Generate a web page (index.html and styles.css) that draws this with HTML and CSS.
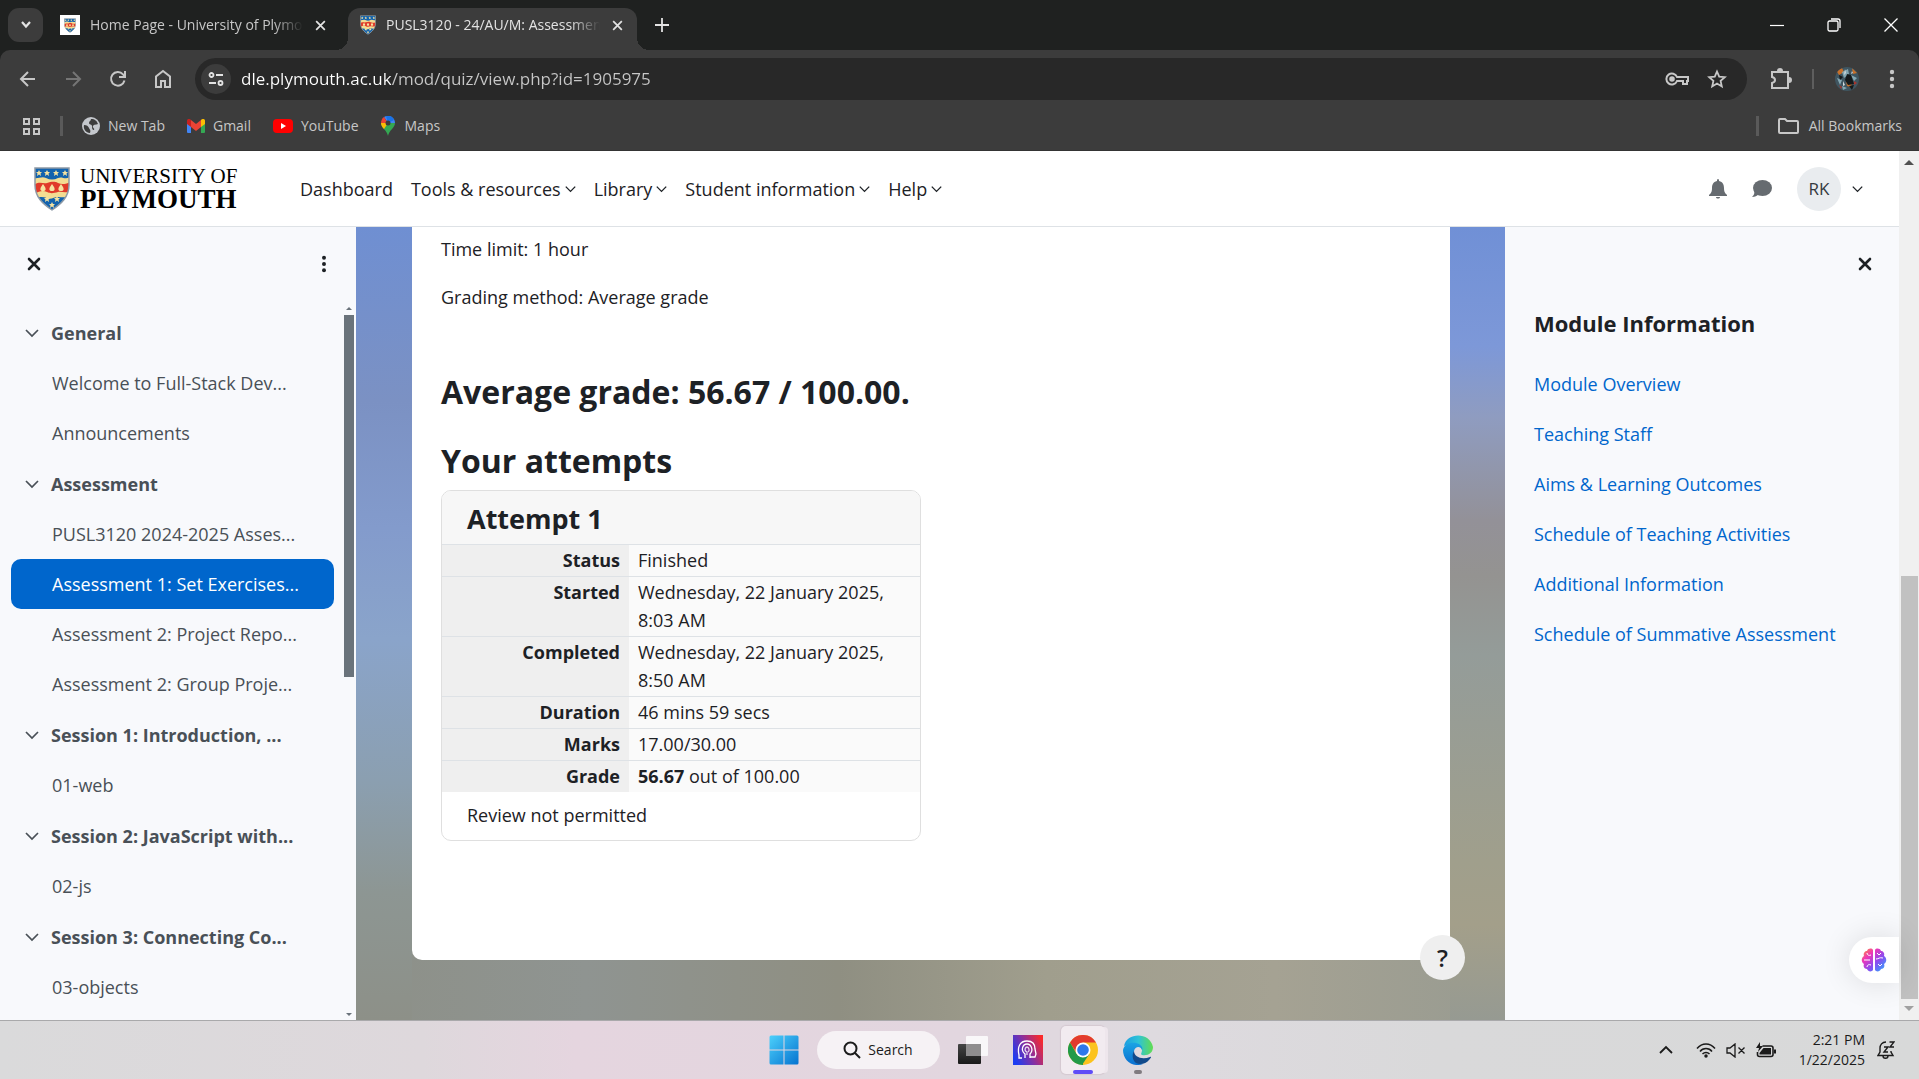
FILE: index.html
```html
<!DOCTYPE html>
<html lang="en">
<head>
<meta charset="utf-8">
<title>PUSL3120 - 24/AU/M: Assessment 1: Set Exercises</title>
<link rel="stylesheet" href="styles.css">
</head>
<body>
<svg class="defs" aria-hidden="true">
  <defs>
    <linearGradient id="win" x1="0" y1="0" x2="1" y2="1"><stop offset="0" stop-color="#4cd0fb"/><stop offset="1" stop-color="#0573d0"/></linearGradient>
    <linearGradient id="app" x1="0" y1="0.7" x2="1" y2="0.2"><stop offset="0" stop-color="#1c3df2"/><stop offset="0.5" stop-color="#8a2f9e"/><stop offset="1" stop-color="#fb2a2a"/></linearGradient>
    <linearGradient id="dark" x1="0" y1="0" x2="0" y2="1"><stop offset="0" stop-color="#454545"/><stop offset="1" stop-color="#191919"/></linearGradient>
    <linearGradient id="edge1" x1="0" y1="0" x2="1" y2="0"><stop offset="0" stop-color="#1b9de2"/><stop offset="0.5" stop-color="#2fc3d6"/><stop offset="1" stop-color="#62dd4f"/></linearGradient>
    <linearGradient id="edge2" x1="0" y1="0" x2="0" y2="1"><stop offset="0" stop-color="#1ba4e4"/><stop offset="1" stop-color="#0a6fd0"/></linearGradient>
    <linearGradient id="brain" x1="0" y1="0" x2="1" y2="1"><stop offset="0" stop-color="#ff9a2e"/><stop offset="0.3" stop-color="#ee35b8"/><stop offset="0.6" stop-color="#8a4cf0"/><stop offset="1" stop-color="#22b4ff"/></linearGradient>
    <clipPath id="round"><circle cx="13" cy="13" r="12"/></clipPath>
    <clipPath id="shieldclip"><path d="M1 1h34v17c0 12-8 19-17 25C9 37 1 30 1 18z"/></clipPath>
    <symbol id="shield" viewBox="0 0 36 44">
      <g clip-path="url(#shieldclip)">
        <path fill="#f3dc92" d="M0 0h36v44H0z"/>
        <path fill="#1363ae" d="M0 0h36v10c-5 3-8-1-12 1s-8 2-12 0-8 1-12 0z"/>
        <path fill="#e03a2a" d="M0 18c5-4 9-1 13-2s7-2 11 0 8 1 12-1v9c-5 3-8 0-12 1s-7 2-11 0-8-1-13 2z"/>
        <path fill="#1363ae" d="M0 32c6-3 9-2 13-1 4 2 7-1 11-1s8 1 12-1v15H0z"/>
        <g fill="#f5e2a0"><path id="star" d="M5 3l1 2h2L6.500 6.500 7 9 5 7.500 3 9l.5-2.500L2 5h2z"/><use href="#star" x="8"/><use href="#star" x="17"/><use href="#star" x="26"/><path id="drop" d="M9 17l2 3c1 2 1 4-2 4s-3-2-2-4z"/><use href="#drop" x="9"/><use href="#drop" x="18"/><use href="#star" x="8" y="26"/><use href="#star" x="18" y="26"/><use href="#star" x="13" y="32"/></g>
      </g>
      <path fill="none" stroke="#8d99a5" stroke-width="1.5" d="M1 1h34v17c0 12-8 19-17 25C9 37 1 30 1 18z"/>
    </symbol>
    <symbol id="x" viewBox="0 0 12 12"><path d="M2 2l8 8M10 2l-8 8" fill="none" stroke="currentColor" stroke-width="1.6"/></symbol>
    <symbol id="xb" viewBox="0 0 14 14"><path d="M2 2l10 10M12 2L2 12" fill="none" stroke="currentColor" stroke-width="2.6" stroke-linecap="round"/></symbol>
    <symbol id="down" viewBox="0 0 14 10"><path d="M1 2l6 6 6-6" fill="none" stroke="currentColor" stroke-width="1.7"/></symbol>
    <symbol id="dots" viewBox="0 0 6 20"><g fill="currentColor"><circle cx="3" cy="3" r="2.2"/><circle cx="3" cy="10" r="2.2"/><circle cx="3" cy="17" r="2.2"/></g></symbol>
  </defs>
</svg>

<div class="tabstrip">
  <button class="tabsearch" aria-label="Search tabs"><svg width="12" height="10" viewBox="0 0 12 10"><path d="M2 2l4 4.500L10 2" fill="none" stroke="currentColor" stroke-width="2.200"/></svg></button>
  <div class="tab">
    <span class="favicon"><svg width="12" height="15"><use href="#shield"/></svg></span>
    <span class="tab-title">Home Page - University of Plymouth</span>
    <button class="tab-close" aria-label="Close tab"><svg width="13" height="13"><use href="#x"/></svg></button>
  </div>
  <div class="tab active">
    <svg width="16" height="20"><use href="#shield"/></svg>
    <span class="tab-title">PUSL3120 - 24/AU/M: Assessment 1</span>
    <button class="tab-close" aria-label="Close tab"><svg width="13" height="13"><use href="#x"/></svg></button>
  </div>
  <button class="newtab" aria-label="New tab"><svg width="14" height="14" viewBox="0 0 14 14"><path d="M7 0v14M0 7h14" stroke="currentColor" stroke-width="1.8"/></svg></button>
  <div class="winctl">
    <button aria-label="Minimize"><svg width="14" height="14" viewBox="0 0 14 14"><path d="M0 7.5h14" stroke="#fff" stroke-width="1.2"/></svg></button>
    <button aria-label="Restore"><svg width="14" height="14" viewBox="0 0 14 14" fill="none" stroke="#fff" stroke-width="1.3"><rect x="1" y="3" width="10" height="10" rx="1.5"/><path d="M4 1h7a2 2 0 0 1 2 2v7"/></svg></button>
    <button aria-label="Close"><svg width="14" height="14" viewBox="0 0 14 14"><path d="M.5 .5l13 13M13.500 .5l-13 13" stroke="#fff" stroke-width="1.3"/></svg></button>
  </div>
</div>

<div class="toolbar">
  <button class="tool" aria-label="Back"><svg width="18" height="18" viewBox="0 0 18 18" fill="none" stroke="#c7c7c7" stroke-width="2"><path d="M16 9H3M9 2L2 9l7 7"/></svg></button>
  <button class="tool" aria-label="Forward"><svg width="18" height="18" viewBox="0 0 18 18" fill="none" stroke="#757575" stroke-width="2"><path d="M2 9h13M9 2l7 7-7 7"/></svg></button>
  <button class="tool" aria-label="Reload"><svg width="18" height="18" viewBox="0 0 18 18" fill="none" stroke="#c7c7c7" stroke-width="2"><path d="M15.500 10.500A6.800 6.800 0 1 1 14 4.300l2 2.200M16 1v6h-6"/></svg></button>
  <button class="tool" aria-label="Home"><svg width="18" height="20" viewBox="0 0 18 20" fill="none" stroke="#c7c7c7" stroke-width="2"><path d="M2 18V7.500L9 2l7 5.500V18h-5v-6H7v6z"/></svg></button>
  <div class="omnibox">
    <button class="siteinfo" aria-label="Site information"><svg width="16" height="16" viewBox="0 0 16 16" fill="none" stroke="#e3e3e3" stroke-width="1.8"><circle cx="3.500" cy="4" r="2"/><path d="M8 4h7M1 12h7"/><circle cx="12.500" cy="12" r="2"/></svg></button>
    <input class="url" type="text" aria-label="Address" value="dle.plymouth.ac.uk/mod/quiz/view.php?id=1905975">
    <button class="omni-btn" aria-label="Passwords"><svg width="24" height="14" viewBox="0 0 24 14" fill="none" stroke="#c7c7c7" stroke-width="2"><path d="M12 5h11v4h-1v3h-4V9h-6a5.500 5.500 0 1 1 0-4z"/><circle cx="7" cy="7" r="1.800" fill="#c7c7c7"/></svg></button>
    <button class="omni-btn" aria-label="Bookmark"><svg width="20" height="20" viewBox="0 0 20 20" fill="none" stroke="#c7c7c7" stroke-width="1.800"><path d="M10 2.500l2.200 5.200 5.600.5-4.200 3.700 1.200 5.500-4.800-2.900-4.800 2.900 1.200-5.500L2.200 8.200l5.600-.5z"/></svg></button>
  </div>
  <div class="toolbar-end">
    <button aria-label="Extensions"><svg width="22" height="22" viewBox="0 0 22 22" fill="none" stroke="#c7c7c7" stroke-width="2"><path d="M2 4h16v16H2v-5c4-1 4-5 0-6z"/><path d="M8 3a2 2 0 0 1 4 0zM19 10a2 2 0 0 1 0 4z" fill="#c7c7c7"/></svg></button>
    <span class="bar"></span>
    <button aria-label="Profile"><svg width="26" height="26" viewBox="0 0 26 26"><g clip-path="url(#round)"><path fill="#3f5560" d="M0 0h26v26H0z"/><path fill="#c8702a" d="M2 4l6-2 2 4-5 3zM18 2l5 5-4 1zM12 15l6 2-1 4-4-1z"/><path fill="#84a7b2" d="M8 6l6-3 1 5-5 4zM3 12l5 2-2 5zM17 9l6 3-3 3zM8 20l5 2-4 2z"/><path fill="#15191b" d="M13 8l4 1 3 9-6 1-3-5zM5 9l4 2-3 3zM15 20l5-1-2 5z"/><path fill="#a8352d" d="M5 19l3 2-1 2zM20 15l3 2-3 2z"/><path fill="#d2dade" d="M11 3l1 4-2 2zM9 15l2 4-2 1zM18 5l1 2-2 1z"/></g></svg></button>
    <button class="menu" aria-label="Menu"><svg width="6" height="20"><use href="#dots"/></svg></button>
  </div>
</div>

<nav class="bookmarks" aria-label="Bookmarks">
  <button aria-label="Tab groups"><svg width="19" height="19" viewBox="0 0 19 19" fill="none" stroke="#c7c7c7" stroke-width="2"><path d="M2 2h5v5H2zM12 2h5v5h-5zM2 12h5v5H2zM12 12h5v5h-5z"/></svg></button>
  <span class="bar wide"></span>
  <a href="#"><svg width="18" height="18" viewBox="0 0 18 18"><circle cx="9" cy="9" r="9" fill="#c4c7cc"/><path fill="#3c3c3c" d="M2 8c3 0 4 1 5 3s2 2 1 5C4 16 1 12 2 8zM9 2c4 0 6 2 7 5-2 1-4 0-5 2s2 2 1 4c-2 0-2-2-2-4S7 8 7 6s2-2 2-4z"/></svg>New Tab</a>
  <a href="#"><svg width="18" height="14" viewBox="0 0 18 14"><path fill="#4285f4" d="M0 2h4v12H1a1 1 0 0 1-1-1z"/><path fill="#34a853" d="M14 2h4v11a1 1 0 0 1-1 1h-3z"/><path fill="#fbbc04" d="M14 1c2-2 4-1 4 1v3l-4 3z"/><path fill="#c5221f" d="M4 1C2-1 0 0 0 2v3l4 3z"/><path fill="#ea4335" d="M4 1l5 4 5-4v7l-5 4-5-4z"/></svg>Gmail</a>
  <a href="#"><svg width="20" height="14" viewBox="0 0 20 14"><rect width="20" height="14" rx="4" fill="#f00"/><path fill="#fff" d="M8 4l5 3-5 3z"/></svg>YouTube</a>
  <a href="#" class="maps"><svg width="14" height="20" viewBox="0 0 14 20"><path fill="#34a853" d="M7 20C6 14 0 12 0 7h14c0 5-6 7-7 13z"/><path fill="#fbbc04" d="M0 7h7l-4 6C1 11 0 9 0 7z"/><path fill="#4285f4" d="M3 1c6-3 11 1 11 6L7 7z"/><path fill="#1a73e8" d="M5 0c4-1 7 1 8 4L7 7z"/><path fill="#ea4335" d="M3 1l4 6H0c0-2 1-5 3-6z"/><circle cx="7" cy="7" r="2.500" fill="#3c3c3c"/></svg>Maps</a>
  <span class="spring"></span>
  <span class="bar wide"></span>
  <a href="#" class="all"><svg width="21" height="16" viewBox="0 0 21 16" fill="none" stroke="#c7c7c7" stroke-width="2"><path d="M1 2a1 1 0 0 1 1-1h5l2 2h10a1 1 0 0 1 1 1v10a1 1 0 0 1-1 1H2a1 1 0 0 1-1-1z"/></svg>All Bookmarks</a>
</nav>

<div class="viewport">
  <div class="site">
    <header class="site-header">
      <a href="#" class="brand">
        <svg width="36" height="44"><use href="#shield"/></svg>
        <span class="brand-name"><span class="brand-top">UNIVERSITY OF</span><span class="brand-bottom">PLYMOUTH</span></span>
      </a>
      <nav class="mainnav">
        <a href="#">Dashboard</a>
        <a href="#">Tools &amp; resources<svg width="11" height="8"><use href="#down"/></svg></a>
        <a href="#">Library<svg width="11" height="8"><use href="#down"/></svg></a>
        <a href="#">Student information<svg width="11" height="8"><use href="#down"/></svg></a>
        <a href="#">Help<svg width="11" height="8"><use href="#down"/></svg></a>
      </nav>
      <div class="usernav">
        <button aria-label="Notifications"><svg width="18" height="20" viewBox="0 0 18 20" fill="#666b70"><path d="M9 0c1 0 1 1 1 2 4 1 5 4 5 7 0 4 1 5 3 7v1H0v-1c2-2 3-3 3-7 0-3 1-6 5-7 0-1 0-2 1-2zM7 18h4c0 2-4 2-4 0z"/></svg></button>
        <button aria-label="Messages"><svg width="20" height="18" viewBox="0 0 20 18" fill="#666b70"><ellipse cx="10.500" cy="8" rx="9.500" ry="8"/><path d="M2 10c1 3 0 5-2 7 3 0 5-1 7-3z"/></svg></button>
        <button class="user" aria-label="User menu"><span class="initials">RK</span><svg width="11" height="8"><use href="#down"/></svg></button>
      </div>
    </header>

    <div class="columns">
      <aside class="index">
        <div class="index-head">
          <button aria-label="Close course index"><svg width="14" height="14"><use href="#xb"/></svg></button>
          <button aria-label="Course index options"><svg width="6" height="18"><use href="#dots"/></svg></button>
        </div>
        <div class="index-body">
          <nav class="index-list">
            <section>
              <h2><svg width="14" height="10"><use href="#down"/></svg><a href="#">General</a></h2>
              <a href="#">Welcome to Full-Stack Dev...</a>
              <a href="#">Announcements</a>
            </section>
            <section>
              <h2><svg width="14" height="10"><use href="#down"/></svg><a href="#">Assessment</a></h2>
              <a href="#">PUSL3120 2024-2025 Asses...</a>
              <a href="#" class="current">Assessment 1: Set Exercises...</a>
              <a href="#">Assessment 2: Project Repo...</a>
              <a href="#">Assessment 2: Group Proje...</a>
            </section>
            <section>
              <h2><svg width="14" height="10"><use href="#down"/></svg><a href="#">Session 1: Introduction, ...</a></h2>
              <a href="#">01-web</a>
            </section>
            <section>
              <h2><svg width="14" height="10"><use href="#down"/></svg><a href="#">Session 2: JavaScript with...</a></h2>
              <a href="#">02-js</a>
            </section>
            <section>
              <h2><svg width="14" height="10"><use href="#down"/></svg><a href="#">Session 3: Connecting Co...</a></h2>
              <a href="#">03-objects</a>
            </section>
          </nav>
          <div class="index-scroll"><span class="arrow up"></span><span class="thumb"></span><span class="arrow dn"></span></div>
        </div>
      </aside>

      <main class="backdrop">
        <div class="page">
          <p>Time limit: 1 hour</p>
          <p>Grading method: Average grade</p>
          <h3 class="average">Average grade: 56.67 / 100.00.</h3>
          <h3>Your attempts</h3>
          <div class="attempt">
            <h4>Attempt 1</h4>
            <table>
              <tr><th scope="row">Status</th><td>Finished</td></tr>
              <tr><th scope="row">Started</th><td>Wednesday, 22 January 2025,<br>8:03 AM</td></tr>
              <tr><th scope="row">Completed</th><td>Wednesday, 22 January 2025,<br>8:50 AM</td></tr>
              <tr><th scope="row">Duration</th><td>46 mins 59 secs</td></tr>
              <tr><th scope="row">Marks</th><td>17.00/30.00</td></tr>
              <tr><th scope="row">Grade</th><td><b>56.67</b> out of 100.00</td></tr>
            </table>
            <div class="attempt-foot">Review not permitted</div>
          </div>
        </div>
        <button class="help">?</button>
      </main>

      <aside class="drawer">
        <button class="drawer-close" aria-label="Close block drawer"><svg width="14" height="14"><use href="#xb"/></svg></button>
        <h2>Module Information</h2>
        <ul>
          <li><a href="#">Module Overview</a></li>
          <li><a href="#">Teaching Staff</a></li>
          <li><a href="#">Aims &amp; Learning Outcomes</a></li>
          <li><a href="#">Schedule of Teaching Activities</a></li>
          <li><a href="#">Additional Information</a></li>
          <li><a href="#">Schedule of Summative Assessment</a></li>
        </ul>
        <button class="assistant" aria-label="Assistant"><svg width="26" height="24" viewBox="0 0 26 24"><path fill="url(#brain)" d="M12 2v20c-1 2-5 2-6-1-3 0-4-3-3-5-3-2-3-6 0-8-1-3 1-5 3-5 1-3 5-3 6-1zM14 2c1-2 5-2 6 1 2 0 4 2 3 5 3 2 3 6 0 8 1 2 0 5-3 5-1 3-5 3-6 1z"/><path fill="none" stroke="#fff" d="M3 12h6M6 5c0 2 2 3 4 2M6 19c0-2 2-3 4-2M16 5l2 2 2-2M15 11c3 0 3-2 7-1M17 16l2 2 2-2"/></svg></button>
      </aside>
    </div>
  </div>
  <div class="page-scroll"><span class="arrow up"></span><span class="thumb"></span><span class="arrow dn"></span></div>
</div>

<footer class="taskbar">
  <div class="apps">
    <button aria-label="Start"><svg width="30" height="30" viewBox="0 0 30 30" fill="url(#win)"><path d="M2 .5h12.500v14H.5V2A1.500 1.500 0 0 1 2 .5zM15.500 .5H28A1.500 1.500 0 0 1 29.500 2v12.500h-14zM.5 15.500h14v14H2A1.500 1.500 0 0 1 .5 28zM15.500 15.500h14V28a1.500 1.500 0 0 1-1.500 1.500H15.500z"/></svg></button>
    <button class="search"><svg width="18" height="18" viewBox="0 0 18 18" fill="none" stroke="#1b1b1b" stroke-width="2"><circle cx="7.500" cy="7.500" r="6"/><path d="M12 12l5 5"/></svg>Search</button>
    <button aria-label="Task view"><svg width="30" height="30" viewBox="0 0 30 30"><rect y="9" width="23" height="20" rx="1" fill="url(#dark)"/><rect x="8" y="1" width="22" height="20" rx="1" fill="#fff" fill-opacity=".8"/><path fill="#8f8d8e" d="M8 9h15v12H8z"/></svg></button>
    <button aria-label="App" class="app"><svg width="30" height="30" viewBox="0 0 30 30"><path fill="url(#app)" d="M0 0h30v30H0z"/><g fill="none" stroke="#fff" stroke-width="1.300"><path d="M9 23H6v-3c-2-8 1-14 8-14 6 0 8 4 8 8l1 5-1 3h-5"/><path d="M12 23v-4c-5-4-2-10 2-10s7 6 3 10v4"/><path d="M14 20v-3c-3-1-2-5 0-5s3 4 1 5" stroke-opacity=".8"/></g></svg></button>
    <button aria-label="Chrome" class="running front"><svg width="30" height="30" viewBox="0 0 30 30"><circle cx="15" cy="15" r="15" fill="#fcc31e"/><path fill="#e33b2e" d="M2 7.500a15 15 0 0 1 26 0H15l-6 11z"/><path fill="#229a48" d="M2 7.500l6.500 11.250L15 22.500 15 30A15 15 0 0 1 2 7.500z"/><path fill="#229a48" d="M14 30l7.500-11.250L15 22z"/><circle cx="15" cy="15" r="7.500" fill="#fff"/><circle cx="15" cy="15" r="5.800" fill="#2f78ea"/></svg></button>
    <button aria-label="Edge" class="running"><svg width="30" height="30" viewBox="0 0 30 30"><path fill="url(#edge1)" d="M1 11C4-3 27-3 30 12c0 6-5 9-11 8-2-1 0-2 0-5C18 9 8 7 1 11z"/><path fill="url(#edge2)" d="M0 15C1 8 10 6 16 9c3 2 4 4 3 6-1-4-7-4-8 1-1 6 3 11 9 13C9 33 0 25 0 15z"/><path fill="#114a8b" d="M11 16c0 6 8 9 16 6 2-1 1 1-1 3-3 4-9 5-13 3-4-3-4-9-2-12z"/></svg></button>
  </div>
  <div class="tray">
    <button aria-label="Hidden icons"><svg width="14" height="10" viewBox="0 0 14 10"><path d="M1 8l6-6 6 6" fill="none" stroke="#1b1b1b" stroke-width="1.800"/></svg></button>
    <button class="status" aria-label="Network, volume and battery">
      <svg width="20" height="15" viewBox="0 0 20 15" fill="none" stroke="#1b1b1b" stroke-width="1.500"><path d="M1 5.500c5-6 13-6 18 0M4 8.500c3-4 9-4 12 0M6.500 11c2-2 5-2 7 0"/><circle cx="10" cy="13" r="1" fill="#1b1b1b"/></svg>
      <svg width="20" height="15" viewBox="0 0 20 15" fill="none" stroke="#1b1b1b" stroke-width="1.300"><path d="M1 5h3l5-4v13l-5-4H1zM12.500 4.500l6 6M18.500 4.500l-6 6"/></svg>
      <svg width="20" height="16" viewBox="0 0 20 16"><path d="M6.500 4H15a2 2 0 0 1 2 2v6.500a2 2 0 0 1-2 2H3.500a2 2 0 0 1-2-2V10" fill="none" stroke="#1b1b1b" stroke-width="1.600"/><path fill="#1b1b1b" d="M7.500 6H15v6.500H3.500V11zM18 7.500h2v4h-2zM4 0L0 6h3l-1 4 5-6H4z"/></svg>
    </button>
    <div class="clock"><span>2:21 PM</span><span>1/22/2025</span></div>
    <button aria-label="Notifications"><svg width="18" height="18" viewBox="0 0 18 18" fill="none" stroke="#1b1b1b" stroke-width="1.400"><path d="M9 1C5 1 3 4 3 7v4l-2 3.500h15L14 11V10M6 15c0 3 5 3 5 0M7 6h4l-4 5h4M12.500 1H17l-4 5h4"/></svg></button>
  </div>
</footer>
</body>
</html>
```
FILE: styles.css
```css
* { box-sizing: border-box; }
html, body { height: 100%; }
body {
  margin: 0;
  display: flex;
  flex-direction: column;
  overflow: hidden;
  background: #1f2120;
  font-family: "Open Sans", "Noto Sans", sans-serif;
  font-size: 18px;
  line-height: 28px;
  color: #1d2125;
}
button {
  border: 0;
  padding: 0;
  background: none;
  color: inherit;
  font: inherit;
  display: flex;
  align-items: center;
  justify-content: center;
}
a { color: inherit; text-decoration: none; }
h2, h3, h4, p, ul { margin: 0; padding: 0; }
svg { flex: none; }
.defs { position: absolute; width: 0; height: 0; }

/* Browser tabs */
.tabstrip {
  display: flex;
  align-items: center;
  height: 50px;
  padding-left: 8px;
  color: #e3e3e3;
  font-size: 14px;
}
.tabsearch { width: 35px; height: 34px; border-radius: 11px; background: #3c3c3c; }
.tab { display: flex; align-items: center; gap: 10px; width: 289px; height: 42px; padding: 0 12px; color: #c7c7c7; }
.tabsearch + .tab { width: 305px; padding-right: 20px; padding-left: 17px; }
.tab-title {
  flex: 1;
  overflow: hidden;
  white-space: nowrap;
  line-height: 20px;
  mask-image: linear-gradient(to right, #000 86%, transparent);
}
.tab-close { width: 15px; height: 24px; color: #e3e3e3; }
.favicon { display: flex; align-items: center; justify-content: center; width: 20px; height: 20px; background: #fff; }
.tab.active {
  position: relative;
  align-self: flex-end;
  padding-bottom: 8px;
  background: #3c3c3c;
  color: #e3e3e3;
  border-radius: 12px 12px 0 0;
}
.tab.active::before, .tab.active::after {
  content: "";
  position: absolute;
  bottom: 0;
  width: 12px;
  height: 12px;
}
.tab.active::before { left: -12px; background: radial-gradient(circle at 0 0, transparent 12px, #3c3c3c 12px); }
.tab.active::after { right: -12px; background: radial-gradient(circle at 100% 0, transparent 12px, #3c3c3c 12px); }
.newtab { width: 50px; height: 34px; }
.winctl { display: flex; margin-left: auto; }
.winctl button { width: 57px; height: 48px; }

/* Address bar */
.toolbar {
  display: flex;
  align-items: center;
  height: 58px;
  padding-left: 5px;
  background: #3c3c3c;
  border-radius: 10px 10px 0 0;
}
.tool { width: 45px; height: 40px; }
.omnibox {
  flex: 1;
  display: flex;
  align-items: center;
  height: 42px;
  margin-left: 10px;
  padding: 0 10px 0 6px;
  border-radius: 21px;
  background: #282828;
}
.siteinfo { width: 30px; height: 30px; border-radius: 15px; background: #3c3c3c; }
.url {
  flex: 1;
  min-width: 0;
  margin-left: 10px;
  padding: 0;
  border: 0;
  outline: 0;
  font: inherit;
  font-size: 17px;
  color: transparent;
  background: linear-gradient(to right, #fff 150px, #c7c7c7 150px);
  background-clip: text;
}
.omni-btn { width: 40px; height: 40px; }
.toolbar-end { display: flex; align-items: center; gap: 20px; width: 172px; padding-left: 23px; color: #c7c7c7; }
.menu { margin-left: 9px; }
.bar { width: 2px; height: 20px; background: #5e5e5e; }

/* Bookmarks */
.bookmarks {
  display: flex;
  align-items: center;
  gap: 22px;
  height: 43px;
  padding: 0 17px 6px 22px;
  background: #3c3c3c;
  border-bottom: 1px solid #343434;
  color: #c7c7c7;
  font-size: 14px;
  line-height: 20px;
}
.bookmarks a { display: flex; align-items: center; gap: 8px; }
.bookmarks .all, .bookmarks .maps { gap: 10px; }
.bar.wide { width: 3px; margin: 0 -3px; background: #5a5a5a; }
.spring { flex: 1; }

/* Page area */
.viewport { flex: 1; display: flex; min-height: 0; background: #fff; }
.site { flex: 1; display: flex; flex-direction: column; min-width: 0; }
.site-header {
  display: flex;
  align-items: center;
  height: 76px;
  padding: 0 36px 0 34px;
  border-bottom: 1px solid #dee2e6;
}
.brand { display: flex; align-items: center; gap: 10px; width: 266px; color: #000; font-family: "Liberation Serif", serif; }
.brand-name { display: flex; flex-direction: column; }
.brand-top { font-size: 21px; line-height: 20px; }
.brand-bottom { font-size: 27px; line-height: 26px; font-weight: 700; }
.mainnav { display: flex; gap: 18px; flex: 1; }
.mainnav a { display: flex; align-items: center; gap: 4px; white-space: nowrap; }
.usernav { display: flex; align-items: center; gap: 25px; }
.user { gap: 11px; }
.initials { width: 44px; height: 44px; border-radius: 22px; background: #e9ecef; color: #343a40; line-height: 44px; font-size: 17px; }

.columns { flex: 1; display: flex; min-height: 0; }

/* Course index */
.index { display: flex; flex-direction: column; width: 356px; background: #f8f9fc; }
.index-head { display: flex; align-items: center; justify-content: space-between; height: 73px; padding: 0 29px 0 27px; }
.index-body { flex: 1; display: flex; min-height: 0; overflow: hidden; }
.index-list { flex: 1; padding: 8px 10px 0 11px; }
.index-list section { margin-bottom: 1px; }
.index-list h2, .index-list section > a { display: flex; align-items: center; height: 50px; font-size: 18px; color: #495057; white-space: nowrap; }
.index-list h2 { gap: 12px; padding-left: 14px; font-weight: 700; }
.index-list section > a { padding-left: 41px; border-radius: 10px; }
.index-list section > a.current { background: #06c; color: #fff; }
.index-scroll { display: flex; flex-direction: column; align-items: center; width: 12px; padding: 7px 2px 4px 0; }
.index-scroll .thumb { width: 10px; height: 51%; margin: 5px 0 auto; background: #6a737b; }
.arrow { width: 0; height: 0; border: 3px solid transparent; }
.arrow.up { border-top: 0; border-bottom-color: #6a737b; }
.arrow.dn { border-bottom: 0; border-top-color: #6a737b; }

/* Quiz page */
.backdrop {
  position: relative;
  flex: 1;
  padding: 0 55px 60px 56px;
  background:
    linear-gradient(to bottom, #6f8fd2, #7b91c3 22%, #839bcc 38%, #8aa4ca 52%, #8b9fb0 70%, #8d9693 84%, #8d9088) left / 56px 100% no-repeat,
    linear-gradient(to bottom, #7090d6, #7d98d8 15%, #8f9cc0 24%, #939198 37%, #949391 44%, #949c99 54%, #a09f8c 80%, #a39f8a 88%, #969a92) right / 55px 100% no-repeat,
    linear-gradient(to right, #8d9088, #8f9491 20%, #8f8f82 42%, #a09e8d 60%, #a5a293 80%, #989b91);
}
.page { height: 100%; padding: 8px 29px 0; background: #fff; border-radius: 0 0 10px 10px; }
.page p { margin-bottom: 20px; }
.page h3 { font-size: 32px; line-height: 38px; margin: 31px 0 10px; }
.page h3.average { margin: 62px 0 31px; }
.attempt { width: 480px; border: 1px solid #dfdfdf; border-radius: 10px; overflow: hidden; }
.attempt h4 { padding: 11px 25px 8px; font-size: 27px; line-height: 34px; background: #f7f7f7; border-bottom: 1px solid #dee2e6; }
.attempt table { width: 100%; border-collapse: collapse; }
.attempt th, .attempt td { padding: 1px 9px 2px; vertical-align: top; }
.attempt tr + tr { border-top: 1px solid #dee2e6; }
.attempt th { width: 187px; text-align: right; background: #efefef; }
.attempt td { background: #fafafa; }
.attempt-foot { padding: 9px 25px 11px; }
.help {
  position: absolute;
  right: 40px;
  bottom: 40px;
  width: 45px;
  height: 45px;
  border-radius: 50%;
  background: #efefef;
  font-size: 24px;
  font-weight: 600;
}

/* Block drawer */
.drawer { position: relative; width: 394px; padding: 0 27px 0 29px; background: #f8f9fc; }
.drawer-close { margin-left: auto; height: 73px; }
.drawer h2 { margin: 8px 0 21px; font-size: 22px; line-height: 30px; }
.drawer ul { list-style: none; }
.drawer li { height: 50px; line-height: 50px; white-space: nowrap; }
.drawer a { color: #06c; }
.assistant {
  position: absolute;
  right: 0;
  bottom: 37px;
  width: 50px;
  height: 46px;
  border-radius: 23px 0 0 23px;
  background: #fff;
  box-shadow: 0 0 30px rgba(0, 0, 0, .12);
}

.page-scroll { display: flex; flex-direction: column; align-items: center; width: 20px; padding: 9px 0 9px; background: #f0f0f0; }
.page-scroll .thumb { width: 17px; height: 423px; margin: auto 0 7px; background: #c1c1c1; }
.page-scroll .arrow { border-width: 5px; }
.page-scroll .up { border-top: 0; border-bottom-color: #505050; }
.page-scroll .dn { border-bottom: 0; border-top-color: #a0a0a0; }

/* Taskbar */
.taskbar {
  display: grid;
  grid-template-columns: 1fr auto 1fr;
  align-items: center;
  height: 59px;
  border-top: 1px solid #a9a9ab;
  background: linear-gradient(to right, #dadadb, #ded8dc 22%, #e5d5df 30%, #e2d6df 50%, #dedadf 60%, #d9d9da 75%, #d8d9d9);
}
.apps { grid-column: 2; display: flex; align-items: center; gap: 18px; padding-left: 2px; }
.search { gap: 7px; width: 123px; height: 38px; border-radius: 19px; background: #f6f2f5; font-size: 14px; color: #1b1b1b; }
.app { margin-left: 7px; }
.running { position: relative; width: 30px; height: 48px; }
.running::after {
  content: "";
  position: absolute;
  bottom: 0;
  left: 11px;
  width: 8px;
  height: 4px;
  border-radius: 2px;
  background: #807b80;
}
.running.front { width: 44px; border-radius: 5px; background: #f2ebf0; box-shadow: 4px 0 0 -1px #eee6ec, 0 0 1px 1px #d5c9d1; }
.running.front::after { left: 12px; width: 20px; background: #5f4cf7; }
.tray { display: flex; align-items: center; justify-content: flex-end; gap: 12px; padding-right: 24px; }
.status { gap: 10px; padding: 0 11px; }
.clock { display: flex; flex-direction: column; text-align: right; font-size: 14px; line-height: 20px; color: #1b1b1b; }
```
